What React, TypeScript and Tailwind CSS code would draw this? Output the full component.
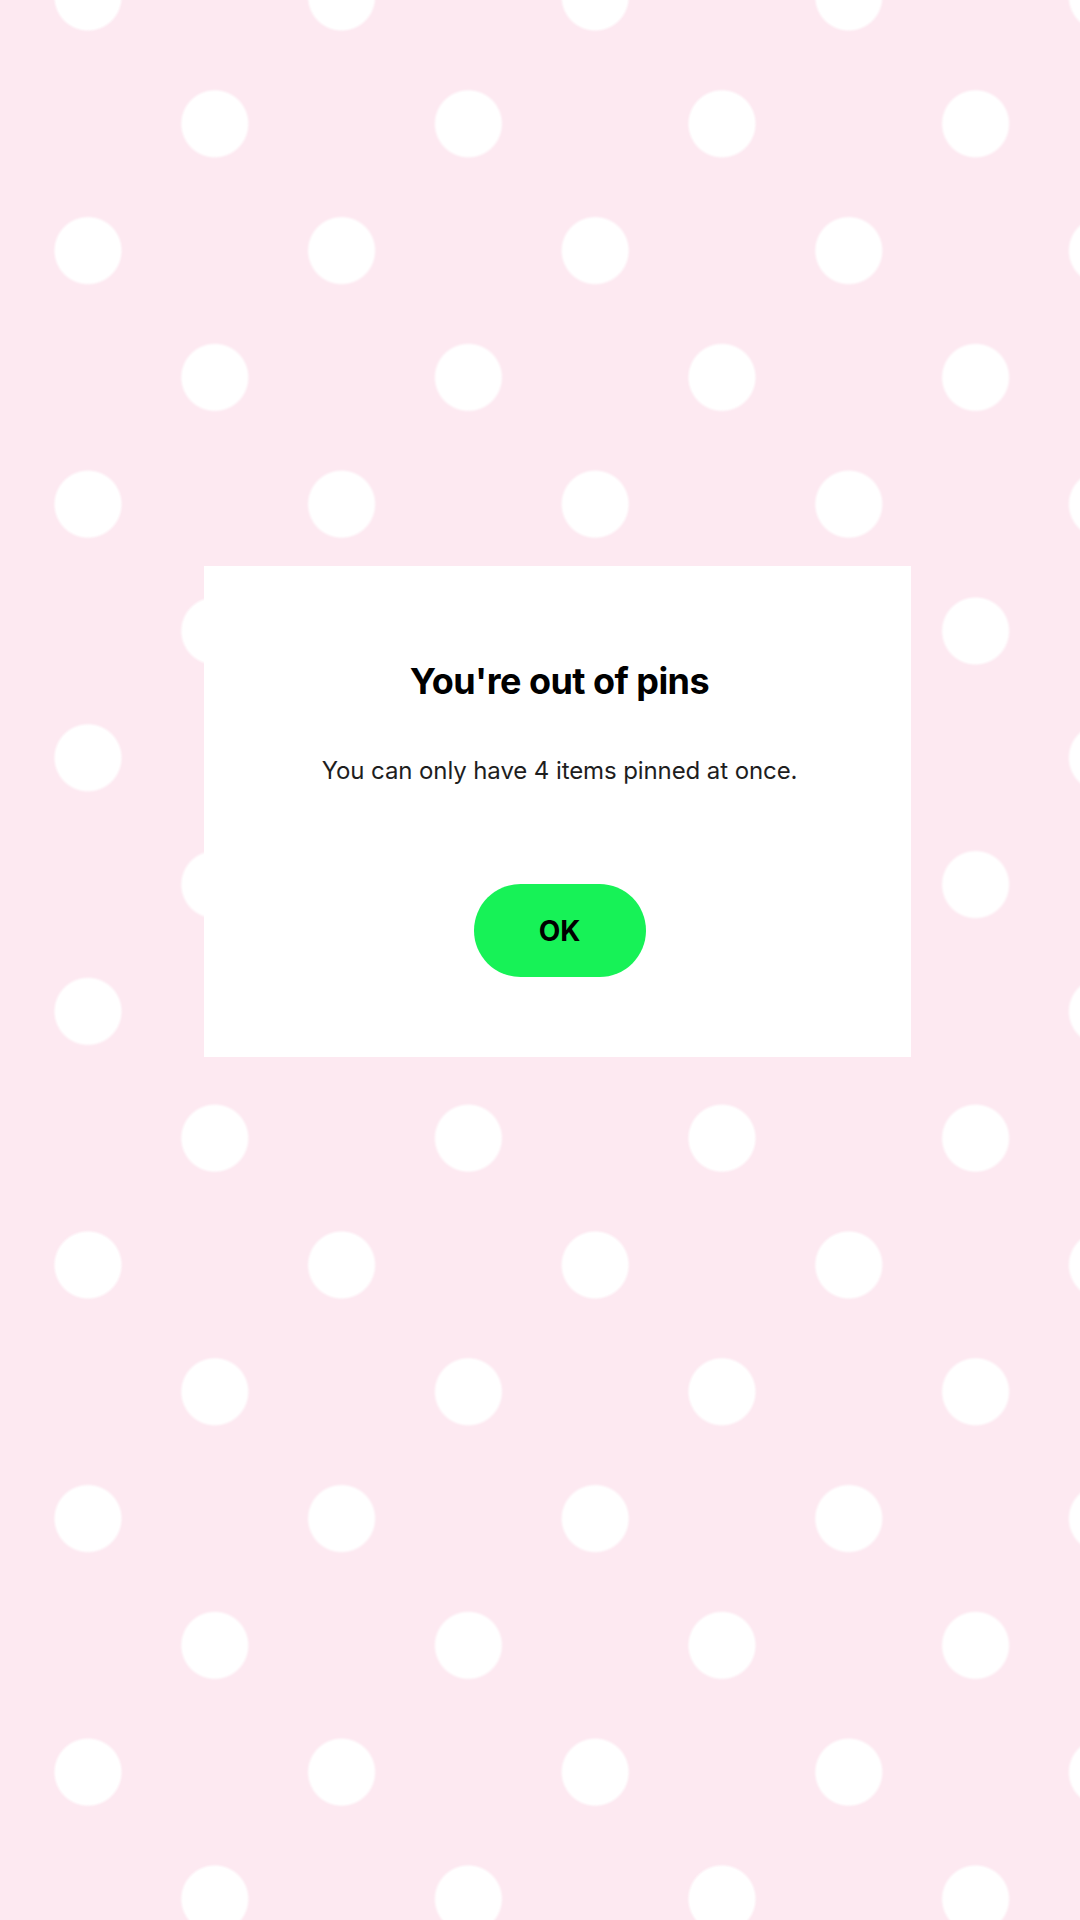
import React from "react";

// Polka-dot backdrop with an "out of pins" alert dialog.
export default function App() {
  return (
    <div
      className="w-[1080px] h-[1920px] flex flex-col items-start bg-[#fde9f1] bg-[radial-gradient(circle_at_center,#ffffff_32px,rgba(255,255,255,0)_35px),radial-gradient(circle_at_center,#ffffff_32px,rgba(255,255,255,0)_35px)] bg-size-[253.6px_253.6px] bg-position-[-38.8px_123.8px,88px_-3px]"
      style={{ fontFamily: "Inter, 'Noto Sans', sans-serif" }}
    >
      <div className="mt-[566px] ml-[204px] w-[707px] h-[491px] bg-white flex flex-col items-center pl-[4px]">
        <h1 className="mt-[94px] text-[36px] leading-[42px] font-bold text-black tracking-[-0.015em]">
          You're out of pins
        </h1>
        <p className="mt-[54px] text-[24px] leading-[30px] text-[#1e1e1e] tracking-[-0.004em]">
          You can only have 4 items pinned at once.
        </p>
        <button className="mt-[98px] w-[172px] h-[93px] rounded-full bg-[#17f257] text-[28px] font-bold text-black">
          OK
        </button>
      </div>
    </div>
  );
}
